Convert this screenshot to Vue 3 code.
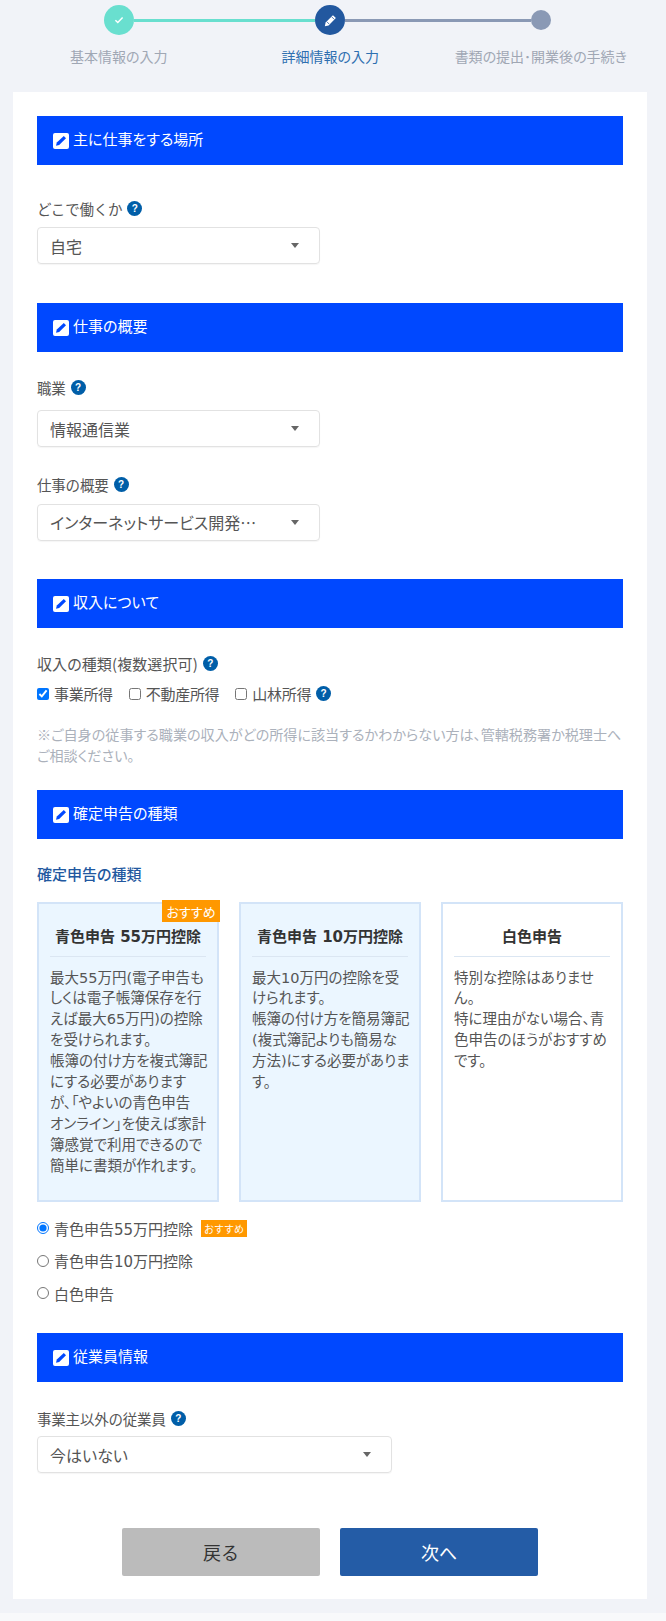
<script setup>
const plans = [
  { title: '青色申告 55万円控除', rec: true, tint: true, body: '最大55万円(電子申告も\nしくは電子帳簿保存を行\nえば最大65万円)の控除\nを受けられます。\n帳簿の付け方を複式簿記\nにする必要があります\nが、「やよいの青色申告\nオンライン」を使えば家計\n簿感覚で利用できるので\n簡単に書類が作れます。' },
  { title: '青色申告 10万円控除', tint: true, body: '最大10万円の控除を受\nけられます。\n帳簿の付け方を簡易簿記\n(複式簿記よりも簡易な\n方法)にする必要がありま\nす。' },
  { title: '白色申告', body: '特別な控除はありませ\nん。\n特に理由がない場合、青\n色申告のほうがおすすめ\nです。' },
]
</script>

<template>
  <div class="page">
    <div class="track">
      <span class="dot done">
        <svg width="10" height="8" viewBox="0 0 12 10"><path d="M1.5 5.2l3 3 6-6.4" fill="none" stroke="#fff" stroke-width="1.8"/></svg>
      </span>
      <span class="line teal"></span>
      <span class="dot now">
        <svg width="13" height="13" viewBox="0 0 16 16"><path d="M11 1.4l3.6 3.6-9 9-4.6 1 1-4.6z" fill="#fff"/><path d="M9.6 3.6l2.8 2.8M3.6 9.6l2.8 2.8" stroke="#22589f" stroke-width="1"/></svg>
      </span>
      <span class="line slate"></span>
      <span class="dot todo"></span>
    </div>
    <div class="steps">
      <span>基本情報の入力</span>
      <span class="active">詳細情報の入力</span>
      <span>書類の提出･開業後の手続き</span>
    </div>

    <main class="card">
      <h2 class="band">
        <svg class="edit" viewBox="0 0 16 16"><rect width="16" height="16" rx="2" fill="#fff"/><path d="M10.8 3l2.2 2.2-6.8 6.8-3.2.8.8-3.2z" fill="#0048ff"/></svg><span>主に仕事をする場所</span>
      </h2>
      <div class="label first">どこで働くか<i class="help">?</i></div>
      <div class="select s1"><span>自宅</span><b class="caret"></b></div>

      <h2 class="band b2">
        <svg class="edit" viewBox="0 0 16 16"><rect width="16" height="16" rx="2" fill="#fff"/><path d="M10.8 3l2.2 2.2-6.8 6.8-3.2.8.8-3.2z" fill="#0048ff"/></svg><span>仕事の概要</span>
      </h2>
      <div class="label">職業<i class="help">?</i></div>
      <div class="select s2"><span>情報通信業</span><b class="caret"></b></div>
      <div class="label second">仕事の概要<i class="help">?</i></div>
      <div class="select s3"><span>インターネットサービス開発…</span><b class="caret"></b></div>

      <h2 class="band b3">
        <svg class="edit" viewBox="0 0 16 16"><rect width="16" height="16" rx="2" fill="#fff"/><path d="M10.8 3l2.2 2.2-6.8 6.8-3.2.8.8-3.2z" fill="#0048ff"/></svg><span>収入について</span>
      </h2>
      <div class="label income">収入の種類(複数選択可)<i class="help">?</i></div>
      <div class="checks">
        <label><input type="checkbox" checked>事業所得</label>
        <label><input type="checkbox">不動産所得</label>
        <label><input type="checkbox">山林所得<i class="help">?</i></label>
      </div>
      <p class="note">※ご自身の従事する職業の収入がどの所得に該当するかわからない方は、管轄税務署か税理士へご相談ください。</p>

      <h2 class="band b4">
        <svg class="edit" viewBox="0 0 16 16"><rect width="16" height="16" rx="2" fill="#fff"/><path d="M10.8 3l2.2 2.2-6.8 6.8-3.2.8.8-3.2z" fill="#0048ff"/></svg><span>確定申告の種類</span>
      </h2>
      <div class="sub">確定申告の種類</div>
      <div class="plans">
        <article v-for="p in plans" :key="p.title" class="plan" :class="{ tint: p.tint }">
          <em v-if="p.rec" class="flag">おすすめ</em>
          <h3>{{ p.title }}</h3>
          <p>{{ p.body }}</p>
        </article>
      </div>
      <div class="radios">
        <label><input type="radio" name="kind" checked>青色申告55万円控除<em class="tag">おすすめ</em></label>
        <label><input type="radio" name="kind">青色申告10万円控除</label>
        <label><input type="radio" name="kind">白色申告</label>
      </div>

      <h2 class="band b5">
        <svg class="edit" viewBox="0 0 16 16"><rect width="16" height="16" rx="2" fill="#fff"/><path d="M10.8 3l2.2 2.2-6.8 6.8-3.2.8.8-3.2z" fill="#0048ff"/></svg><span>従業員情報</span>
      </h2>
      <div class="label staff">事業主以外の従業員<i class="help">?</i></div>
      <div class="select s4"><span>今はいない</span><b class="caret"></b></div>

      <div class="actions">
        <button class="back">戻る</button>
        <button class="go">次へ</button>
      </div>
    </main>
    <div class="strip"></div>
  </div>
</template>

<style>
body { background: #f1f3f8; }
</style>

<style scoped>
.page {
  width: 666px;
  height: 1621px;
  background: #f1f3f8;
  font-family: "Noto Sans CJK JP", "Noto Sans", sans-serif;
  font-size: 14px;
  color: #555;
  overflow: hidden;
}
.track { display: flex; align-items: center; height: 30px; padding: 5px 0 0 104px; }
.dot { display: flex; align-items: center; justify-content: center; border-radius: 50%; flex: none; }
.done { width: 30px; height: 30px; background: #69dfcf; }
.now { width: 30px; height: 30px; background: #22589f; }
.todo { width: 20px; height: 20px; background: #8a99b5; }
.line { height: 3px; margin-top: 1px; }
.teal { width: 181px; background: #69dfcf; }
.slate { width: 186px; background: #8a99b5; }
.steps { display: grid; grid-template-columns: repeat(3, 211.5px); padding: 11px 0 0 13px; height: 46px; font-feature-settings: "palt"; }
.steps span { text-align: center; color: #a0a7b4; line-height: 21px; white-space: nowrap; }
.steps span:last-child { margin-left: -2px; }
.steps .active { color: #2e6fb0; }

.card { margin-left: 13px; width: 634px; height: 1507px; background: #fff; padding: 24px 24px 0; box-sizing: border-box; }
.band { display: flex; align-items: center; gap: 4px; height: 49px; margin: 0; padding-left: 16px; background: #0048ff; color: #fff; font-size: 15px; font-weight: 400; font-feature-settings: "palt"; }
.band span { margin-bottom: 4px; }
.b2 { margin-top: 39px; }
.b3 { margin-top: 38.5px; }
.b4 { margin-top: 24px; }
.b5 { margin-top: 23.5px; }
.edit { width: 16px; height: 16px; }
.label { margin-top: 25px; line-height: 21px; display: flex; align-items: center; font-size: 14.5px; letter-spacing: -.2px; }
.label.first { margin-top: 33px; }
.label.second { margin-top: 26.5px; }
.label.income { font-size: 15px; font-feature-settings: "palt"; letter-spacing: .1px; }
.label.staff { margin-top: 25.5px; }
.help { display: inline-flex; align-items: center; justify-content: center; width: 15px; height: 15px; margin-left: 5px; border-radius: 50%; background: #005ea8; color: #fff; font: 700 10px "Liberation Sans", sans-serif; letter-spacing: 0; }
.select { display: flex; align-items: center; justify-content: space-between; width: 283px; height: 37px; padding: 0 20px 0 12px; border: 1px solid #e2e2e2; border-radius: 4px; box-sizing: border-box; font-size: 16px; font-feature-settings: "palt"; box-shadow: 0 1px 1px rgba(0,0,0,.04); }
.s1 { margin-top: 8px; }
.s2 { margin-top: 12px; }
.s3 { margin-top: 9px; }
.s4 { margin-top: 7.5px; width: 355px; }
.caret { border: 4px solid transparent; border-top: 5px solid #666; border-bottom: 0; }

.checks { display: flex; gap: 16px; margin-top: 9px; line-height: 21px; font-size: 15px; letter-spacing: -.3px; }
.checks label { display: flex; align-items: center; }
input { margin: 0 5px 0 0; width: 12px; height: 12px; accent-color: #0075ff; }
.note { margin: 20px 0 0; line-height: 21px; color: #abb1bb; font-size: 14.1px; font-feature-settings: "palt"; }

.sub { margin-top: 23.5px; line-height: 21px; color: #22589f; font-weight: 500; font-size: 15px; font-feature-settings: "palt"; }
.plans { display: grid; grid-template-columns: repeat(3, 182px); gap: 20px; margin-top: 18.5px; font-family: "DejaVu Sans", "Noto Sans CJK JP", sans-serif; }
.plan { position: relative; height: 300px; border: 2px solid #d3e4f8; padding: 0 11px; box-sizing: border-box; background: #fff; }
.plan.tint { background: #ebf6ff; }
.plan h3 { margin: 0; padding: 21px 0 7px; border-bottom: 1px solid #dbe6f2; text-align: center; font-size: 15px; line-height: 24px; font-weight: 700; color: #333; }
.plan p { margin: 10.5px 0 0; line-height: 20.9px; white-space: pre; font-size: 14.5px; font-feature-settings: "palt"; }
.flag { position: absolute; top: -4px; right: -3px; width: 58px; height: 22px; display: flex; align-items: center; justify-content: center; background: #ff9800; color: #fff; font-size: 13px; font-style: normal; font-family: "Noto Sans CJK JP", sans-serif; font-feature-settings: "palt"; }

.radios { margin-top: 10px; font-family: "DejaVu Sans", "Noto Sans CJK JP", sans-serif; font-size: 15px; }
.radios label { display: flex; align-items: center; height: 32.5px; }
.tag { margin-left: 8px; width: 46px; height: 17px; line-height: 17px; text-align: center; background: #ff9800; color: #fff; font-size: 10px; font-style: normal; font-family: "Noto Sans CJK JP", sans-serif; }

.actions { display: flex; justify-content: center; gap: 20px; margin-top: 55px; }
.actions button { width: 198px; height: 48px; border: 0; border-radius: 2px; font: 18px "Noto Sans CJK JP", sans-serif; }
.back { background: #bbb; color: #333; }
.go { background: #245ca6; color: #fff; }
.strip { height: 8px; margin-top: 14px; background: #f8f9fb; }
</style>
